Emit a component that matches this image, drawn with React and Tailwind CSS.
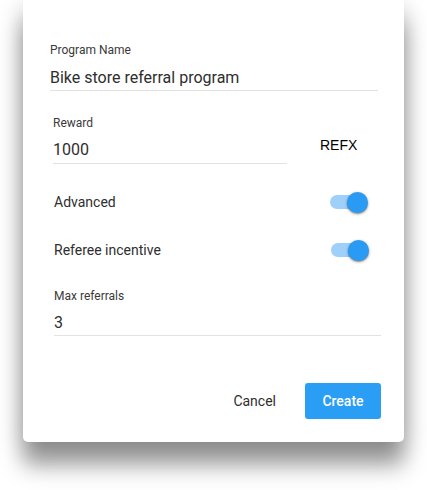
import React from "react";

function Toggle() {
  return (
    <div className="relative w-[38px] h-[22px] shrink-0">
      <div className="absolute left-0 top-[4px] w-[34px] h-[14px] rounded-full bg-[#9fd0fa]" />
      <div className="absolute right-0 top-[1px] w-[21px] h-[21px] rounded-full bg-[#2a9bf4] shadow-[0_1px_3px_rgba(0,0,0,0.4),0_1px_1px_rgba(0,0,0,0.2)]" />
    </div>
  );
}

export default function App() {
  return (
    <div className="w-[427px] h-[490px] bg-white overflow-hidden font-['Roboto',sans-serif]">
      <div className="ml-[23px] w-[381px] h-[442px] bg-white rounded-b-[5px] shadow-[0_24px_22px_rgba(0,0,0,0.36),0_6px_24px_rgba(0,0,0,0.2)] flex flex-col">
        {/* Program name */}
        <div className="pt-[42px] pl-[27px] pr-[26px]">
          <div className="text-[12px] leading-[16px] text-[#3a3a3a]">Program Name</div>
          <div className="mt-[8px] text-[16px] leading-[24px] text-[#2e2e2e] border-b border-[#e2e2e2]">
            Bike store referral program
          </div>
        </div>

        {/* Reward */}
        <div className="mt-[24px] pl-[30px] flex items-start">
          <div className="w-[234px]">
            <div className="text-[12px] leading-[16px] text-[#3a3a3a]">Reward</div>
            <div className="mt-[7px] text-[16px] leading-[24px] text-[#2e2e2e] pb-[1px] border-b border-[#e2e2e2]">
              1000
            </div>
          </div>
          <div className="ml-[33px] mt-[22px] text-[14px] leading-[16px] text-black font-['Liberation_Sans',Arial,sans-serif]">
            REFX
          </div>
        </div>

        {/* Advanced */}
        <div className="mt-[27px] pl-[31px] pr-[36px] flex items-center justify-between h-[22px]">
          <span className="text-[14px] leading-[20px] text-[#2e2e2e]">Advanced</span>
          <Toggle />
        </div>

        {/* Referee incentive */}
        <div className="mt-[26px] pl-[31px] pr-[35px] flex items-center justify-between h-[22px]">
          <span className="text-[14px] leading-[20px] text-[#2e2e2e]">Referee incentive</span>
          <Toggle />
        </div>

        {/* Max referrals */}
        <div className="mt-[27px] pl-[31px] pr-[23px]">
          <div className="text-[12px] leading-[16px] text-[#3a3a3a]">Max referrals</div>
          <div className="mt-[7px] text-[16px] leading-[24px] text-[#2e2e2e] border-b border-[#e2e2e2]">3</div>
        </div>

        {/* Actions */}
        <div className="mt-[47px] pr-[23px] flex items-center justify-end gap-[13px]">
          <button className="h-[36px] px-[16px] text-[14px] text-[#2e2e2e] bg-transparent">Cancel</button>
          <button className="h-[36px] w-[76px] rounded-[3px] bg-[#2a9df4] text-white text-[14px] font-medium">
            Create
          </button>
        </div>
      </div>
    </div>
  );
}
